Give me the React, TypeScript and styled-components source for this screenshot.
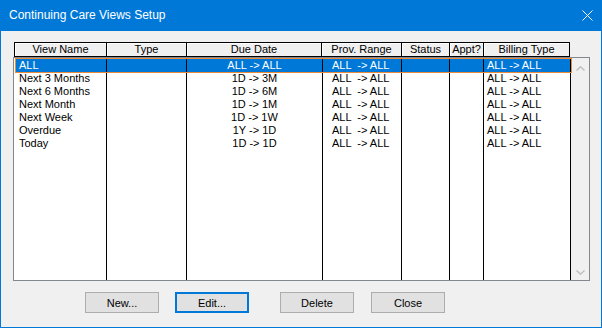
import styled, { createGlobalStyle } from 'styled-components'

type ViewRow = {
  name: string
  due: string
  prov: string
  billing: string
}

const rows: ViewRow[] = [
  { name: 'ALL', due: 'ALL -> ALL', prov: 'ALL  -> ALL', billing: 'ALL -> ALL' },
  { name: 'Next 3 Months', due: '1D -> 3M', prov: 'ALL  -> ALL', billing: 'ALL -> ALL' },
  { name: 'Next 6 Months', due: '1D -> 6M', prov: 'ALL  -> ALL', billing: 'ALL -> ALL' },
  { name: 'Next Month', due: '1D -> 1M', prov: 'ALL  -> ALL', billing: 'ALL -> ALL' },
  { name: 'Next Week', due: '1D -> 1W', prov: 'ALL  -> ALL', billing: 'ALL -> ALL' },
  { name: 'Overdue', due: '1Y -> 1D', prov: 'ALL  -> ALL', billing: 'ALL -> ALL' },
  { name: 'Today', due: '1D -> 1D', prov: 'ALL  -> ALL', billing: 'ALL -> ALL' },
]

// header widths / body widths include the right border line
const headers = [
  { label: 'View Name', width: 93 },
  { label: 'Type', width: 80 },
  { label: 'Due Date', width: 135 },
  { label: 'Prov. Range', width: 80 },
  { label: 'Status', width: 48 },
  { label: 'Appt?', width: 34 },
  { label: 'Billing Type', width: 86 },
]

type Align = 'left' | 'center'
const columns: { width: number; align: Align; pad: number }[] = [
  { width: 91, align: 'left', pad: 3 },
  { width: 80, align: 'left', pad: 3 },
  { width: 136, align: 'center', pad: 0 },
  { width: 79, align: 'left', pad: 9 },
  { width: 48, align: 'left', pad: 3 },
  { width: 34, align: 'left', pad: 3 },
  { width: 87, align: 'left', pad: 3 },
]

const buttons = [
  { label: 'New...', offset: 84, focused: false },
  { label: 'Edit...', offset: 16, focused: true },
  { label: 'Delete', offset: 31, focused: false },
  { label: 'Close', offset: 17, focused: false },
]

const App = () => {
  return (
    <>
      <GlobalStyle />
      <Window>
        <TitleBar>
          <Title>Continuing Care Views Setup</Title>
          <svg width="11" height="11" viewBox="0 0 11 11">
            <path d="M0.5 0.5 L10.5 10.5 M10.5 0.5 L0.5 10.5" stroke="#fff" strokeWidth="1" />
          </svg>
        </TitleBar>
        <Body>
          <Header>
            {headers.map((h, i) => (
              <HeaderCell key={h.label} $width={h.width} $first={i === 0}>
                {h.label}
              </HeaderCell>
            ))}
          </Header>
          <ListBox>
            <Rows>
              {rows.map((r, i) => {
                const values = [r.name, '', r.due, r.prov, '', '', r.billing]
                return (
                  <Row key={r.name} $selected={i === 0}>
                    {values.map((v, c) => (
                      <Cell
                        key={c}
                        $width={columns[c].width}
                        $align={columns[c].align}
                        $pad={columns[c].pad}
                      >
                        {v}
                      </Cell>
                    ))}
                  </Row>
                )
              })}
              <Filler>
                {columns.map((c, i) => (
                  <Cell key={i} $width={c.width} $align={c.align} $pad={c.pad} />
                ))}
              </Filler>
            </Rows>
            <ScrollBar>
              <svg width="9" height="5" viewBox="0 0 9 5">
                <path d="M0.5 4.5 L4.5 0.8 L8.5 4.5" stroke="#bdbdbd" strokeWidth="1.4" fill="none" />
              </svg>
              <svg width="9" height="5" viewBox="0 0 9 5">
                <path d="M0.5 0.5 L4.5 4.2 L8.5 0.5" stroke="#bdbdbd" strokeWidth="1.4" fill="none" />
              </svg>
            </ScrollBar>
          </ListBox>
          <ButtonRow>
            {buttons.map((b) => (
              <Button key={b.label} $offset={b.offset} $focused={b.focused}>
                {b.label}
              </Button>
            ))}
          </ButtonRow>
        </Body>
      </Window>
    </>
  )
}

export default App

const GlobalStyle = createGlobalStyle`
  html, body {
    margin: 0;
    padding: 0;
    background: #f0f0f0;
  }
  * {
    box-sizing: border-box;
  }
`

const Window = styled.div`
  width: 602px;
  height: 328px;
  display: flex;
  flex-direction: column;
  border: 1px solid #0078d7;
  border-top: none;
  background: #f0f0f0;
  font-family: 'Liberation Sans', Arial, sans-serif;
  font-size: 11px;
  color: #000;
`

const TitleBar = styled.div`
  height: 31px;
  margin: 0 -1px;
  padding: 0 9px 0 9px;
  display: flex;
  align-items: center;
  justify-content: space-between;
  background: #0078d7;
`

const Title = styled.span`
  color: #fff;
  font-size: 12px;
  font-family: 'Liberation Sans', Arial, sans-serif;
  margin-top: -1px;
`

const Body = styled.div`
  flex: 1;
  display: flex;
  flex-direction: column;
  padding: 11px 0 0 12px;
`

const Header = styled.div`
  display: flex;
  height: 15px;
  margin-left: 1px;
`

const HeaderCell = styled.div<{ $width: number; $first: boolean }>`
  width: ${(p) => p.$width}px;
  height: 15px;
  background: #f0f0f0;
  border: 1px solid #000;
  border-left: ${(p) => (p.$first ? '1px solid #000' : 'none')};
  box-shadow: inset 1px 1px 0 #fff;
  text-align: center;
  line-height: 13px;
  white-space: nowrap;
  overflow: hidden;
`

const ListBox = styled.div`
  width: 577px;
  height: 224px;
  display: flex;
  border: 1px solid #828790;
  background: #fff;
`

const Rows = styled.div`
  width: 557px;
  display: flex;
  flex-direction: column;
  padding: 1px 0 0 2px;
`

const Row = styled.div<{ $selected: boolean }>`
  display: flex;
  height: 13px;
  flex: none;
  background: ${(p) => (p.$selected ? '#0078d7' : '#fff')};
  color: ${(p) => (p.$selected ? '#fff' : '#000')};
  outline: ${(p) => (p.$selected ? '1px solid #e98b3a' : 'none')};
  position: relative;
  z-index: ${(p) => (p.$selected ? 1 : 0)};
`

const Filler = styled.div`
  display: flex;
  flex: 1;
`

const Cell = styled.div<{ $width: number; $align: Align; $pad: number }>`
  width: ${(p) => p.$width}px;
  flex: none;
  border-right: 1px solid #000;
  padding-left: ${(p) => p.$pad}px;
  text-align: ${(p) => p.$align};
  line-height: 13px;
  white-space: pre;
  overflow: hidden;
`

const ScrollBar = styled.div`
  width: 18px;
  display: flex;
  flex-direction: column;
  justify-content: space-between;
  align-items: center;
  padding: 8px 0 5px 1px;
  background: #f0f0f0;
`

const ButtonRow = styled.div`
  display: flex;
  margin-top: 11px;
  margin-left: -12px;
`

const Button = styled.div<{ $offset: number; $focused: boolean }>`
  width: 74px;
  height: 21px;
  margin-left: ${(p) => p.$offset}px;
  display: flex;
  align-items: center;
  justify-content: center;
  background: #e1e1e1;
  border: ${(p) => (p.$focused ? '2px solid #0078d7' : '1px solid #adadad')};
  font-size: 11px;
`
